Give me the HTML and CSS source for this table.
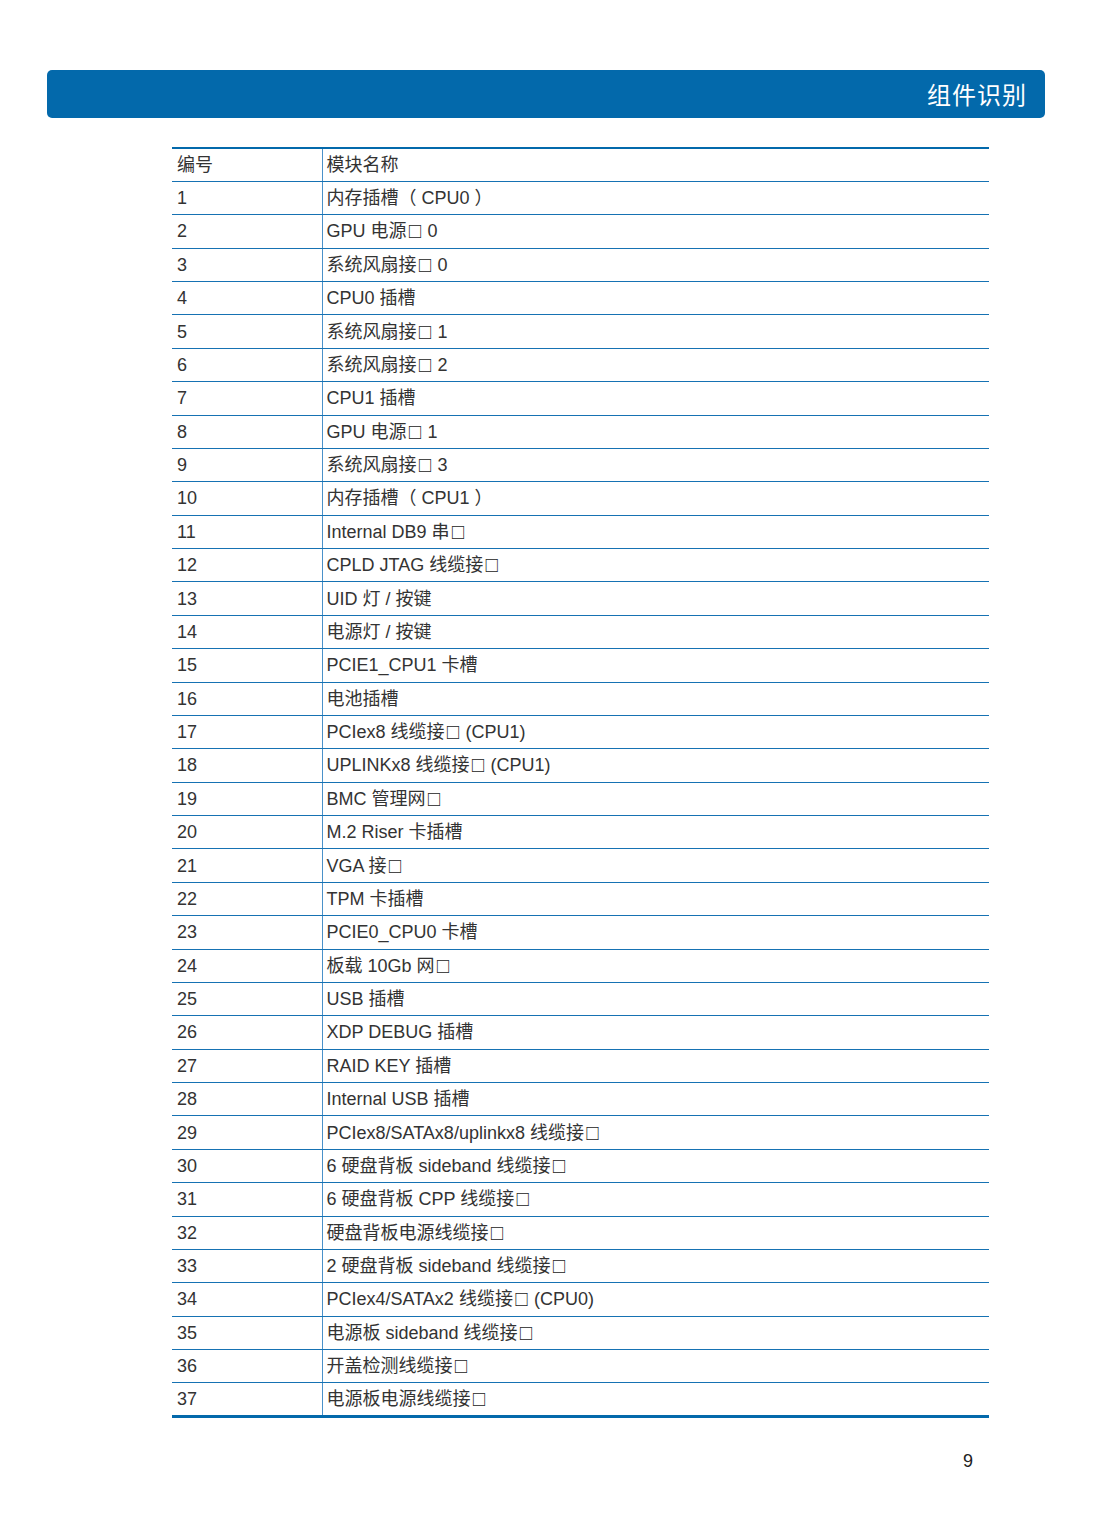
FILE: index.html
```html
<!DOCTYPE html>
<html lang="zh-CN">
<head>
<meta charset="utf-8">
<title>组件识别</title>
<link rel="stylesheet" href="styles.css">
</head>
<body>
<div class="page">
  <header class="banner"><h1 class="banner-title">组件识别</h1></header>
  <table class="parts">
    <tbody>
      <tr><td class="num">编号</td><td class="name">模块名称</td></tr>
      <tr><td class="num">1</td><td class="name">内存插槽（ CPU0 ）</td></tr>
      <tr><td class="num">2</td><td class="name">GPU 电源<span class="sq">□</span> 0</td></tr>
      <tr><td class="num">3</td><td class="name">系统风扇接<span class="sq">□</span> 0</td></tr>
      <tr><td class="num">4</td><td class="name">CPU0 插槽</td></tr>
      <tr><td class="num">5</td><td class="name">系统风扇接<span class="sq">□</span> 1</td></tr>
      <tr><td class="num">6</td><td class="name">系统风扇接<span class="sq">□</span> 2</td></tr>
      <tr><td class="num">7</td><td class="name">CPU1 插槽</td></tr>
      <tr><td class="num">8</td><td class="name">GPU 电源<span class="sq">□</span> 1</td></tr>
      <tr><td class="num">9</td><td class="name">系统风扇接<span class="sq">□</span> 3</td></tr>
      <tr><td class="num">10</td><td class="name">内存插槽（ CPU1 ）</td></tr>
      <tr><td class="num">11</td><td class="name">Internal DB9 串<span class="sq">□</span></td></tr>
      <tr><td class="num">12</td><td class="name">CPLD JTAG 线缆接<span class="sq">□</span></td></tr>
      <tr><td class="num">13</td><td class="name">UID 灯 / 按键</td></tr>
      <tr><td class="num">14</td><td class="name">电源灯 / 按键</td></tr>
      <tr><td class="num">15</td><td class="name">PCIE1_CPU1 卡槽</td></tr>
      <tr><td class="num">16</td><td class="name">电池插槽</td></tr>
      <tr><td class="num">17</td><td class="name">PCIex8 线缆接<span class="sq">□</span> (CPU1)</td></tr>
      <tr><td class="num">18</td><td class="name">UPLINKx8 线缆接<span class="sq">□</span> (CPU1)</td></tr>
      <tr><td class="num">19</td><td class="name">BMC 管理网<span class="sq">□</span></td></tr>
      <tr><td class="num">20</td><td class="name">M.2 Riser 卡插槽</td></tr>
      <tr><td class="num">21</td><td class="name">VGA 接<span class="sq">□</span></td></tr>
      <tr><td class="num">22</td><td class="name">TPM 卡插槽</td></tr>
      <tr><td class="num">23</td><td class="name">PCIE0_CPU0 卡槽</td></tr>
      <tr><td class="num">24</td><td class="name">板载 10Gb 网<span class="sq">□</span></td></tr>
      <tr><td class="num">25</td><td class="name">USB 插槽</td></tr>
      <tr><td class="num">26</td><td class="name">XDP DEBUG 插槽</td></tr>
      <tr><td class="num">27</td><td class="name">RAID KEY 插槽</td></tr>
      <tr><td class="num">28</td><td class="name">Internal USB 插槽</td></tr>
      <tr><td class="num">29</td><td class="name">PCIex8/SATAx8/uplinkx8 线缆接<span class="sq">□</span></td></tr>
      <tr><td class="num">30</td><td class="name">6 硬盘背板 sideband 线缆接<span class="sq">□</span></td></tr>
      <tr><td class="num">31</td><td class="name">6 硬盘背板 CPP 线缆接<span class="sq">□</span></td></tr>
      <tr><td class="num">32</td><td class="name">硬盘背板电源线缆接<span class="sq">□</span></td></tr>
      <tr><td class="num">33</td><td class="name">2 硬盘背板 sideband 线缆接<span class="sq">□</span></td></tr>
      <tr><td class="num">34</td><td class="name">PCIex4/SATAx2 线缆接<span class="sq">□</span> (CPU0)</td></tr>
      <tr><td class="num">35</td><td class="name">电源板 sideband 线缆接<span class="sq">□</span></td></tr>
      <tr><td class="num">36</td><td class="name">开盖检测线缆接<span class="sq">□</span></td></tr>
      <tr><td class="num">37</td><td class="name">电源板电源线缆接<span class="sq">□</span></td></tr>
    </tbody>
  </table>
  <footer class="page-footer"><span class="page-num">9</span></footer>
</div>
</body>
</html>
```

FILE: styles.css
```css
html, body {
  margin: 0;
  padding: 0;
  background: #ffffff;
}

.page {
  width: 1093px;
  min-height: 1535px;
  padding-top: 70px;
  box-sizing: border-box;
  font-family: "Liberation Sans", "Noto Sans CJK SC", sans-serif;
  color: #333333;
}

.banner {
  margin: 0 48px 0 47px;
  height: 48px;
  background: #0369ab;
  border-radius: 5px;
  display: flex;
  align-items: center;
  justify-content: flex-end;
  padding-right: 18px;
}

.banner-title {
  margin: 0;
  font-family: "Noto Sans CJK SC", sans-serif;
  font-weight: 400;
  font-size: 24px;
  letter-spacing: 1px;
  color: #ffffff;
  line-height: 1;
}

.parts {
  margin: 29px 0 0 172px;
  width: 817px;
  border-collapse: collapse;
  border-top: 2px solid #0369ab;
  border-bottom: 3px solid #0369ab;
  font-size: 18px;
}

.parts td {
  height: 33.39px;
  padding: 0 5px;
  box-sizing: border-box;
  border-bottom: 1.5px solid #1672b3;
  vertical-align: middle;
  white-space: nowrap;
  line-height: 1;
}

.parts tr:last-child td {
  border-bottom: none;
}

.parts .num {
  width: 150px;
  border-right: 1.5px solid #4a91c9;
}

.parts .name {
  padding-left: 4px;
}

.sq {
  font-family: "Noto Sans CJK SC", sans-serif;
  font-size: 15px;
  font-weight: 700;
  margin-left: 1px;
  color: #222222;
}

.page-footer {
  display: flex;
  justify-content: flex-end;
  padding: 33px 120px 0 0;
}

.page-num {
  font-size: 18px;
  color: #222;
}
```
